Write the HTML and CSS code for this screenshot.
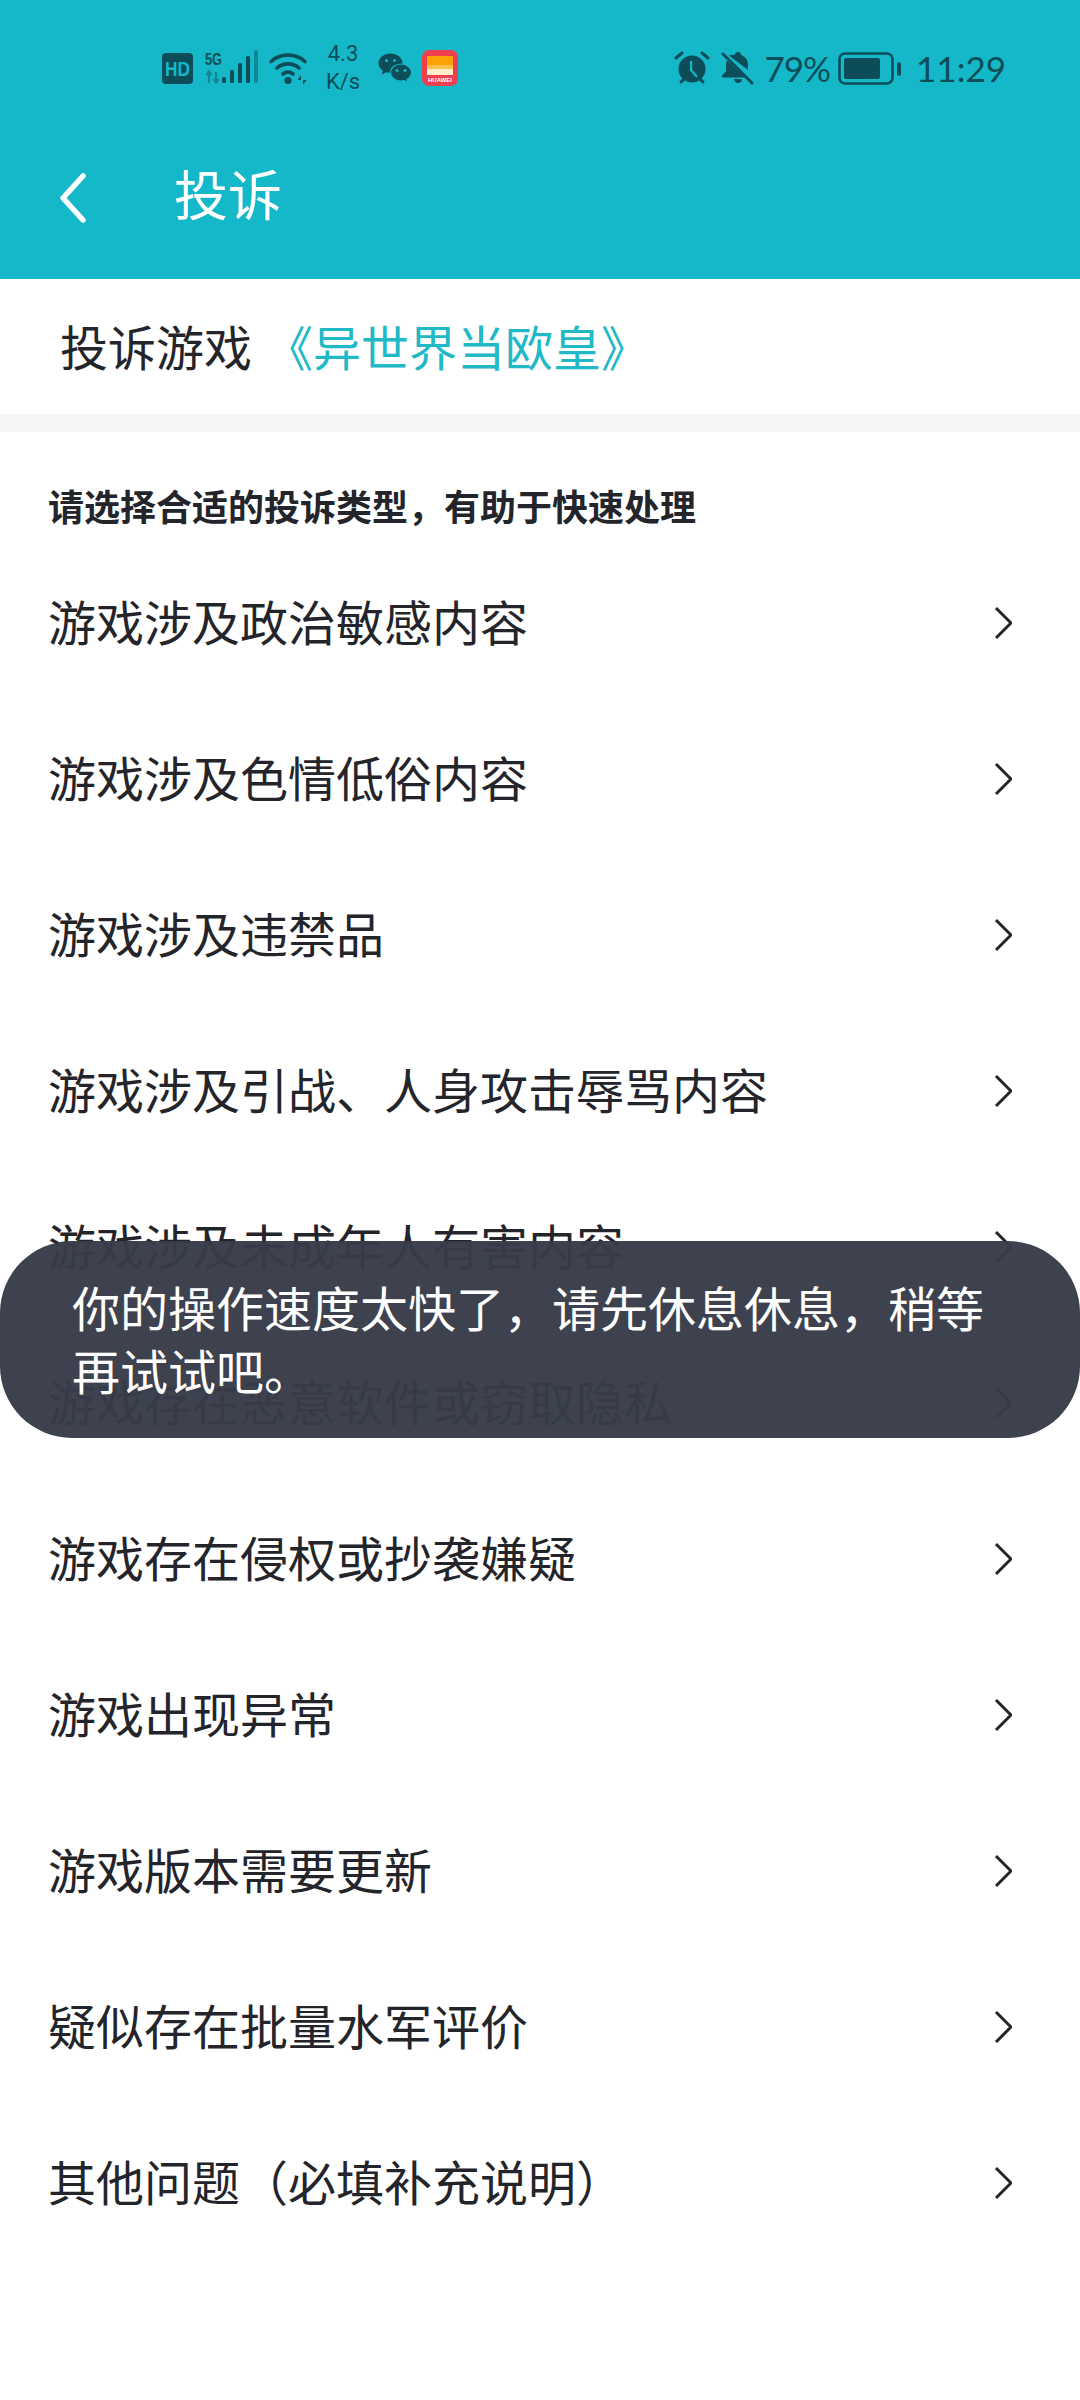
FILE: index.html
```
<!DOCTYPE html>
<html lang="zh-CN">
<head>
<meta charset="utf-8">
<title>投诉</title>
<link rel="stylesheet" href="styles.css">
</head>
<body>
<div class="page">
  <header class="appbar">
    <div class="status">
      <div class="status-left">
        <svg class="ic-hd" width="31" height="31" viewBox="0 0 31 31"><rect width="31" height="31" rx="4" fill="#0d4d59"/><text x="3" y="22.500" class="hd-text" textLength="25" lengthAdjust="spacingAndGlyphs">HD</text></svg>
        <svg class="ic-signal" width="54" height="36" viewBox="0 0 54 36">
          <text x="0" y="15" class="fiveg" textLength="17" lengthAdjust="spacingAndGlyphs">5G</text>
          <path d="M4 33V22M1.500 25L4 21.500 6.500 25M11 33V22M8.500 29L11 32.500 13.500 29" stroke="#0d4d59" stroke-opacity=".45" stroke-width="2.200" fill="none"/>
          <rect x="17" y="27" width="4" height="6" rx="1.500" fill="#0d4d59"/>
          <rect x="25" y="20" width="4" height="13" rx="1.500" fill="#0d4d59"/>
          <rect x="33" y="13" width="4" height="20" rx="1.500" fill="#0d4d59"/>
          <rect x="41" y="6" width="4" height="27" rx="1.500" fill="#0d4d59"/>
          <rect x="49" y="0" width="4" height="33" rx="1.500" fill="#0d4d59" fill-opacity=".45"/>
        </svg>
        <svg class="ic-wifi" width="42" height="34" viewBox="0 0 42 34">
          <path d="M2 10.500C11 2 27 2 36 10.500M8 17C14 11.500 24 11.500 30 17M14 23C17 20.500 21 20.500 24 23" fill="none" stroke="#0d4d59" stroke-width="3.600" stroke-linecap="round"/>
          <circle cx="19" cy="29.500" r="3.600" fill="#0d4d59"/>
          <path d="M32 24l-3.500 5H32zM34 34l3.500-5H34z" fill="#0d4d59"/>
        </svg>
        <div class="speed"><span>4.3</span><span>K/s</span></div>
        <svg class="ic-wechat" width="34" height="30" viewBox="0 0 34 30">
          <path d="M12.500 0.500C5.800 0.500 0.500 4.800 0.500 10.200c0 3 1.700 5.600 4.300 7.400L3.600 21.500l4.500-2.300c1.400.4 2.900.6 4.400.6 6.700 0 12-4.300 12-9.600S19.200.5 12.500.5z" fill="#0d4d59"/>
          <path d="M23 11c-5.800 0-10.500 3.900-10.500 8.600s4.700 8.600 10.500 8.600c1.200 0 2.300-.2 3.400-.5l3.600 1.900-1-3.200c2.700-1.600 4.500-4.100 4.500-6.800C33.500 14.900 28.800 11 23 11z" fill="#0d4d59" stroke="#14b8c8" stroke-width="1.200"/>
          <circle cx="8.500" cy="7.500" r="1.500" fill="#14b8c8"/><circle cx="16.500" cy="7.500" r="1.500" fill="#14b8c8"/>
          <circle cx="19" cy="17.500" r="1.500" fill="#14b8c8"/><circle cx="27" cy="17.500" r="1.500" fill="#14b8c8"/>
        </svg>
        <svg class="ic-app" width="36" height="36" viewBox="0 0 36 36">
          <rect width="36" height="36" rx="7" fill="#ee3f4f"/>
          <rect x="5" y="6" width="26" height="9" fill="#fca205"/>
          <rect x="5" y="15" width="26" height="4" fill="#fdc24a"/>
          <rect x="5" y="19" width="26" height="6" fill="#fdeccb"/>
          <text x="18" y="31.500" class="app-text">HUAWEI</text>
        </svg>
      </div>
      <div class="status-right">
        <svg class="ic-alarm" width="36" height="34" viewBox="0 0 36 34">
          <circle cx="18" cy="18" r="13.500" fill="#0d4d59"/>
          <path d="M2 7l6-5M34 7l-6-5" stroke="#0d4d59" stroke-width="3" stroke-linecap="round"/>
          <path d="M7 31l3-3M29 31l-3-3" stroke="#0d4d59" stroke-width="3" stroke-linecap="round"/>
          <path d="M17 10v9l6 7" fill="none" stroke="#14b8c8" stroke-width="2.200"/>
        </svg>
        <svg class="ic-bell" width="34" height="34" viewBox="0 0 34 34">
          <path d="M17 1a3 3 0 0 1 3 3c5 1.500 7 6 7 10v5L8 4.500C9.500 4 12 3.500 14 4a3 3 0 0 1 3-3zM6 9.500l18 17H1v-2l4-4v-7c0-1.500.3-3 1-4zM13 28h8c0 2.500-2 4-4 4s-4-1.500-4-4z" fill="#0d4d59"/>
          <path d="M2 3l29 29" stroke="#0d4d59" stroke-width="3" stroke-linecap="round"/>
        </svg>
        <span class="pct">79%</span>
        <svg class="ic-battery" width="63" height="33" viewBox="0 0 63 33">
          <rect x="1.500" y="1.500" width="53" height="30" rx="5.500" fill="none" stroke="#0d4d59" stroke-width="2.600"/>
          <rect x="6" y="6" width="36" height="21" rx="2" fill="#0d4d59"/>
          <rect x="59" y="10" width="4" height="14" rx="2" fill="#0d4d59"/>
        </svg>
        <span class="time">11:29</span>
      </div>
    </div>
    <div class="toolbar">
      <svg class="back" width="34" height="52" viewBox="0 0 34 52"><path d="M27 4L7 26l20 22" fill="none" stroke="#fff" stroke-width="5.500" stroke-linecap="round" stroke-linejoin="round"/></svg>
      <h1 class="title">投诉</h1>
    </div>
  </header>
  <section class="game">
    <span class="game-label">投诉游戏</span>
    <span class="game-name">《异世界当欧皇》</span>
  </section>
  <div class="divider"></div>
  <main class="reasons">
    <p class="hint">请选择合适的投诉类型&#xFF0C;有助于快速处理</p>
    <ul class="list">
      <li class="row"><span class="row-text">游戏涉及政治敏感内容</span><svg class="chev" width="18" height="36" viewBox="0 0 18 36"><path d="M2 3l15 15L2 33" fill="none" stroke="#23252b" stroke-width="3"/></svg></li>
      <li class="row"><span class="row-text">游戏涉及色情低俗内容</span><svg class="chev" width="18" height="36" viewBox="0 0 18 36"><path d="M2 3l15 15L2 33" fill="none" stroke="#23252b" stroke-width="3"/></svg></li>
      <li class="row"><span class="row-text">游戏涉及违禁品</span><svg class="chev" width="18" height="36" viewBox="0 0 18 36"><path d="M2 3l15 15L2 33" fill="none" stroke="#23252b" stroke-width="3"/></svg></li>
      <li class="row"><span class="row-text">游戏涉及引战、人身攻击辱骂内容</span><svg class="chev" width="18" height="36" viewBox="0 0 18 36"><path d="M2 3l15 15L2 33" fill="none" stroke="#23252b" stroke-width="3"/></svg></li>
      <li class="row"><span class="row-text">游戏涉及未成年人有害内容</span><svg class="chev" width="18" height="36" viewBox="0 0 18 36"><path d="M2 3l15 15L2 33" fill="none" stroke="#23252b" stroke-width="3"/></svg></li>
      <li class="row"><span class="row-text">游戏存在恶意软件或窃取隐私</span><svg class="chev" width="18" height="36" viewBox="0 0 18 36"><path d="M2 3l15 15L2 33" fill="none" stroke="#23252b" stroke-width="3"/></svg></li>
      <li class="row"><span class="row-text">游戏存在侵权或抄袭嫌疑</span><svg class="chev" width="18" height="36" viewBox="0 0 18 36"><path d="M2 3l15 15L2 33" fill="none" stroke="#23252b" stroke-width="3"/></svg></li>
      <li class="row"><span class="row-text">游戏出现异常</span><svg class="chev" width="18" height="36" viewBox="0 0 18 36"><path d="M2 3l15 15L2 33" fill="none" stroke="#23252b" stroke-width="3"/></svg></li>
      <li class="row"><span class="row-text">游戏版本需要更新</span><svg class="chev" width="18" height="36" viewBox="0 0 18 36"><path d="M2 3l15 15L2 33" fill="none" stroke="#23252b" stroke-width="3"/></svg></li>
      <li class="row"><span class="row-text">疑似存在批量水军评价</span><svg class="chev" width="18" height="36" viewBox="0 0 18 36"><path d="M2 3l15 15L2 33" fill="none" stroke="#23252b" stroke-width="3"/></svg></li>
      <li class="row"><span class="row-text">其他问题&#xFF08;必填补充说明&#xFF09;</span><svg class="chev" width="18" height="36" viewBox="0 0 18 36"><path d="M2 3l15 15L2 33" fill="none" stroke="#23252b" stroke-width="3"/></svg></li>
    </ul>
  </main>
  <div class="toast">你的操作速度太快了&#xFF0C;请先休息休息&#xFF0C;稍等再试试吧。</div>
</div>
</body>
</html>
```
FILE: styles.css
```
* { box-sizing: border-box; }
html, body { margin: 0; padding: 0; background: #fff; }
.page {
  position: relative;
  width: 1080px;
  height: 2400px;
  overflow: hidden;
  background: #fff;
  font-family: "Noto Sans CJK SC", "Noto Sans", sans-serif;
  color: #23252b;
}
.appbar { height: 279px; background: #14b8c8; display: flex; flex-direction: column; }
.status {
  height: 136px;
  display: flex;
  align-items: center;
  justify-content: space-between;
  padding: 0 74px 0 162px;
}
.status-left, .status-right { display: flex; align-items: center; }
.ic-hd { margin-right: 12px; }
.ic-signal { margin-right: 10px; }
.ic-wifi { margin-right: 13px; }
.speed {
  display: flex;
  flex-direction: column;
  align-items: center;
  width: 38px;
  font: 400 22px/28px Roboto, sans-serif;
  color: #0d4d59;
  margin-right: 16px;
}
.ic-wechat { margin-right: 10px; }
.hd-text { font: 700 20px "Liberation Sans", sans-serif; fill: #14b8c8; }
.fiveg { font: 700 17px "Liberation Sans", sans-serif; fill: #0d4d59; }
.app-text { font: 700 6px "Liberation Sans", sans-serif; fill: #fff; text-anchor: middle; }
.ic-alarm { margin-right: 11px; }
.ic-bell { margin-right: 9px; }
.pct, .time { font: 400 35px/40px Lato, sans-serif; color: #0d4d59; }
.pct { margin-right: 8px; letter-spacing: -1px; }
.ic-battery { margin-right: 15px; }
.toolbar { flex: 1; display: flex; align-items: flex-start; padding: 36px 0 0 56px; }
.title { margin: -14px 0 0 84px; font-size: 54px; line-height: 70px; font-weight: 400; color: #fff; }
.game { height: 135px; display: flex; align-items: center; padding: 0 0 3px 60px; font-size: 48px; line-height: 60px; }
.game-label { margin-right: 22px; }
.game-name { color: #22b9c7; margin-left: -9px; }
.divider { height: 18px; background: #f5f6f8; }
.reasons { padding: 0; }
.hint { margin: 0; padding: 49px 0 0 48px; height: 113px; font-size: 36px; line-height: 48px; font-weight: 700; color: #23252b; }
.list { list-style: none; margin: 0; padding: 0; }
.row {
  height: 156px;
  display: flex;
  align-items: center;
  justify-content: space-between;
  padding: 0 68px 0 48px;
  font-size: 48px;
  line-height: 60px;
}
.row-text { padding-bottom: 6px; }
.toast {
  position: absolute;
  left: 0;
  top: 1241px;
  width: 1080px;
  height: 197px;
  padding: 34px 72px 0;
  border-radius: 72px;
  background: rgba(55, 60, 72, .97);
  color: #fff;
  font-size: 48px;
  line-height: 63px;
}
```
